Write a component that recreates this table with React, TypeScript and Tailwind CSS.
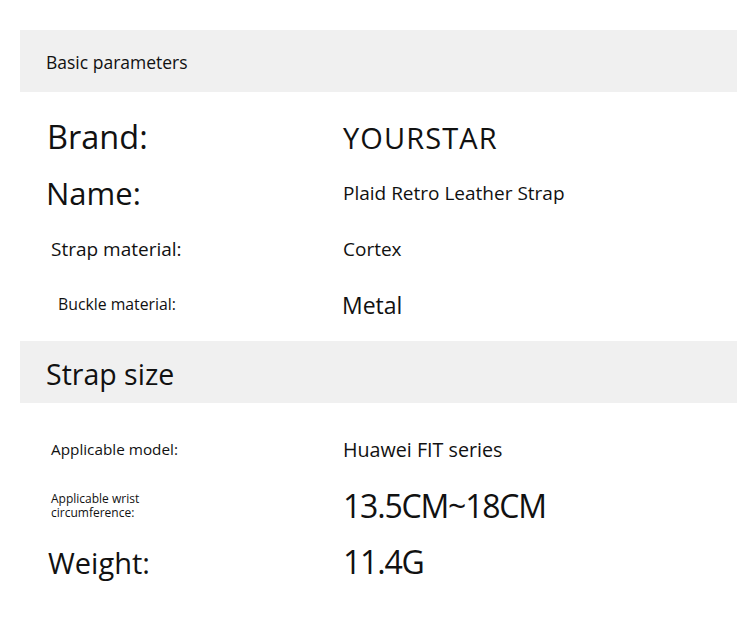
import React from 'react';

type Row = {
  label: React.ReactNode;
  value: string;
  labelClass: string;
  valueClass: string;
};

const basicRows: Row[] = [
  { label: 'Brand:', value: 'YOURSTAR', labelClass: 'pl-[47px] text-[32.5px]', valueClass: 'text-[29px] tracking-[1.1px]' },
  { label: 'Name:', value: 'Plaid Retro Leather Strap', labelClass: 'pl-[46px] text-[31px]', valueClass: 'text-[19px]' },
  { label: 'Strap material:', value: 'Cortex', labelClass: 'pl-[51px] text-[19px]', valueClass: 'text-[19px]' },
  { label: 'Buckle material:', value: 'Metal', labelClass: 'pl-[58px] text-[15.8px]', valueClass: 'text-[23px] -ml-[1px]' },
];

const sizeRows: Row[] = [
  { label: 'Applicable model:', value: 'Huawei FIT series', labelClass: 'pl-[51px] text-[15.3px]', valueClass: 'text-[19.7px]' },
  {
    label: (
      <span className="block leading-[14px]">
        Applicable wrist
        <br />
        circumference:
      </span>
    ),
    value: '13.5CM~18CM',
    labelClass: 'pl-[51px] text-[12px]',
    valueClass: 'text-[32px] tracking-[-1.2px]',
  },
  { label: 'Weight:', value: '11.4G', labelClass: 'pl-[48px] text-[29px]', valueClass: 'text-[32px] tracking-[-1.2px]' },
];

function SectionBar({ title, size }: { title: string; size: string }) {
  return (
    <div className="mx-[20px] w-[717px] h-[62px] bg-[#f0f0f0] flex items-center pl-[26px]">
      <span className={`${size} leading-none text-[#111]`}>{title}</span>
    </div>
  );
}

function ParamRow({ row, height }: { row: Row; height: string }) {
  return (
    <div className={`flex items-center ${height}`}>
      <div className={`w-[343px] shrink-0 leading-none text-[#111] ${row.labelClass}`}>{row.label}</div>
      <div className={`leading-none text-[#111] ${row.valueClass}`}>{row.value}</div>
    </div>
  );
}

export default function App() {
  return (
    <div className="w-[750px] h-[618px] bg-white pt-[30px] overflow-hidden" style={{ fontFamily: '"Open Sans", "Noto Sans", sans-serif' }}>
      {/* Basic parameters */}
      <SectionBar title="Basic parameters" size="text-[17.5px] pt-[3px]" />
      <div className="pt-[17px] pb-[8px]">
        {basicRows.map((row, idx) => (
          <ParamRow key={idx} row={row} height="h-[56px]" />
        ))}
      </div>

      {/* Strap size */}
      <SectionBar title="Strap size" size="text-[28.5px] pt-[5px]" />
      <div className="pt-[19px]">
        {sizeRows.map((row, idx) => (
          <ParamRow key={idx} row={row} height="h-[56px]" />
        ))}
      </div>
    </div>
  );
}
